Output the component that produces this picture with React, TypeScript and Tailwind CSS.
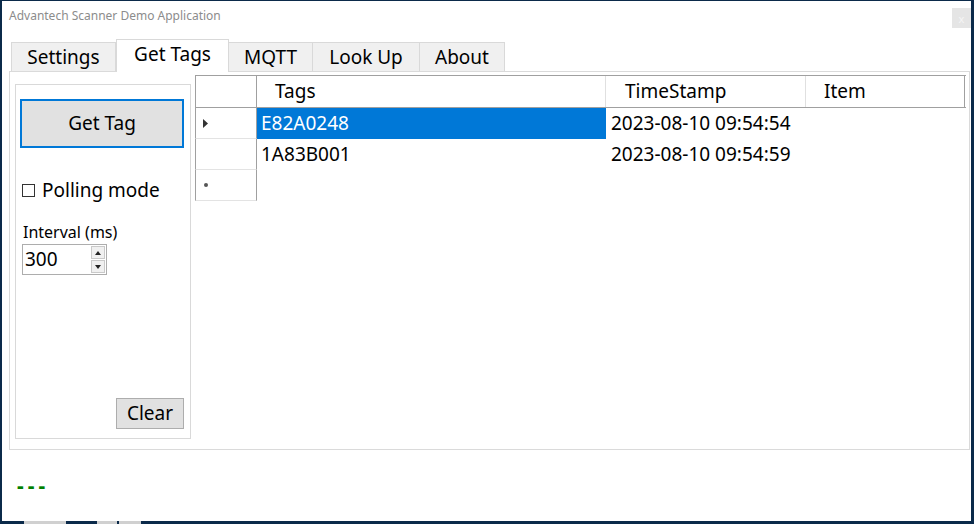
import React from 'react';

const font = { fontFamily: '"Noto Sans", "Open Sans", sans-serif' };

const tabs = [
  { label: 'Settings', w: 'w-[105px]', active: false },
  { label: 'Get Tags', w: 'w-[113px]', active: true },
  { label: 'MQTT', w: 'w-[85px]', active: false },
  { label: 'Look Up', w: 'w-[108px]', active: false },
  { label: 'About', w: 'w-[86px]', active: false },
];

const rows = [
  { tag: 'E82A0248', time: '2023-08-10 09:54:54', current: true },
  { tag: '1A83B001', time: '2023-08-10 09:54:59', current: false },
];

function TabStrip() {
  return (
    <div className="ml-[9px] flex h-[32px] items-end">
      {tabs.map((t) =>
        t.active ? (
          <div
            key={t.label}
            className={`${t.w} relative z-10 -mb-px flex h-[33px] items-center justify-center border border-b-0 border-[#d9d9d9] bg-white pb-[3px] text-[19px] text-black`}
          >
            {t.label}
          </div>
        ) : (
          <div
            key={t.label}
            className={`${t.w} -ml-px flex h-[29px] items-center justify-center border border-b-0 border-[#d9d9d9] bg-[#f0f0f0] text-[19px] text-black first:ml-0`}
          >
            {t.label}
          </div>
        )
      )}
    </div>
  );
}

function SidePanel() {
  return (
    <div className="mt-[12px] mb-[10px] ml-[5px] flex w-[176px] flex-col border border-[#d9d9d9] pl-[4px] pr-[6px] pt-[14px] pb-[9px]">
      <button className="h-[49px] w-[164px] border-2 border-[#0078d7] bg-[#e1e1e1] text-[19px] text-black">
        Get Tag
      </button>
      <label className="mt-[29px] ml-[2px] flex items-center gap-[7px] text-[19px] leading-[26px] text-black">
        <span className="h-[13px] w-[13px] border border-[#333] bg-white" />
        Polling mode
      </label>
      <div className="mt-[18px] ml-[3px] text-[16px] leading-[22px] text-black">Interval (ms)</div>
      <div className="ml-[2px] mt-[1px] flex h-[31px] w-[85px] items-center border border-[#adadad] bg-white pl-[2px] pr-[1px]">
        <span className="flex-1 text-[19px] leading-none text-black">300</span>
        <div className="flex h-[27px] w-[14px] flex-col gap-px">
          <div className="flex flex-1 items-center justify-center border border-[#c9c9c9] bg-[#f0f0f0]">
            <svg width="6" height="4" viewBox="0 0 6 4"><path d="M3 0 L6 4 L0 4 Z" fill="#222" /></svg>
          </div>
          <div className="flex flex-1 items-center justify-center border border-[#c9c9c9] bg-[#f0f0f0]">
            <svg width="6" height="4" viewBox="0 0 6 4"><path d="M0 0 L6 0 L3 4 Z" fill="#222" /></svg>
          </div>
        </div>
      </div>
      <button className="mt-auto h-[31px] w-[68px] self-end border border-[#adadad] bg-[#e1e1e1] text-[19px] leading-none text-black">
        Clear
      </button>
    </div>
  );
}

function Grid() {
  return (
    <div className="mt-[3px] ml-[4px] w-[771px] text-[19px] text-black">
      <div className="flex h-[33px] border-t border-b border-[#a0a0a0]">
        <div className="w-[62px] border-r border-l border-[#a0a0a0]" />
        <div className="flex w-[349px] items-center border-r border-[#e0e0e0] pl-[18px]">Tags</div>
        <div className="flex w-[200px] items-center border-r border-[#e0e0e0] pl-[19px]">TimeStamp</div>
        <div className="flex w-[159px] items-center border-r border-[#a0a0a0] pl-[18px]">Item</div>
      </div>
      {rows.map((r) => (
        <div key={r.tag} className="flex h-[31px]">
          <div className="flex w-[62px] items-center border-r border-b border-l border-[#a0a0a0] border-b-[#e3e3e3] pl-[7px]">
            {r.current && (
              <svg width="5" height="9" viewBox="0 0 5 9"><path d="M0 0 L5 4.5 L0 9 Z" fill="#333" /></svg>
            )}
          </div>
          <div
            className={`flex w-[349px] items-center pl-[4px] ${r.current ? 'bg-[#0078d7] text-white' : ''}`}
          >
            {r.tag}
          </div>
          <div className="flex w-[200px] items-center pl-[5px]">{r.time}</div>
          <div className="w-[159px]" />
        </div>
      ))}
      <div className="flex h-[31px]">
        <div className="flex w-[62px] items-center border-r border-b border-l border-[#a0a0a0] border-b-[#e3e3e3] pl-[8px]">
          <span className="h-[4px] w-[4px] rounded-full bg-[#555]" />
        </div>
      </div>
    </div>
  );
}

export default function App() {
  return (
    <div className="flex h-[524px] w-[974px] flex-col bg-[#0b2a4a] pt-px pl-[2px]" style={font}>
      <div className="flex h-[520px] w-[969px] flex-col bg-white">
        <div className="relative h-[38px]">
          <div className="absolute top-[6px] left-[7px] text-[12px] text-[#8c8c8c]">
            Advantech Scanner Demo Application
          </div>
          <div className="absolute top-[7px] right-0 flex h-[20px] w-[19px] items-center justify-center bg-[#e5e5e5] text-[11px] leading-none text-[#f5f5f5]">
            x
          </div>
        </div>
        <TabStrip />
        <div className="ml-[7px] flex h-[379px] w-[961px] items-start border border-[#dadada] bg-white">
          <div className="flex h-full">
            <SidePanel />
          </div>
          <Grid />
        </div>
        <div className="mt-[22px] ml-[15px] text-[21px] font-bold leading-[26px] tracking-[4px] text-[#008000]">---</div>
      </div>
      <div className="flex h-[3px]">
        <div className="ml-[22px] w-[42px] bg-[#d0d0d0]" />
        <div className="ml-[31px] w-[20px] bg-[#d0d0d0]" />
        <div className="ml-[2px] w-[22px] bg-[#d0d0d0]" />
      </div>
    </div>
  );
}
